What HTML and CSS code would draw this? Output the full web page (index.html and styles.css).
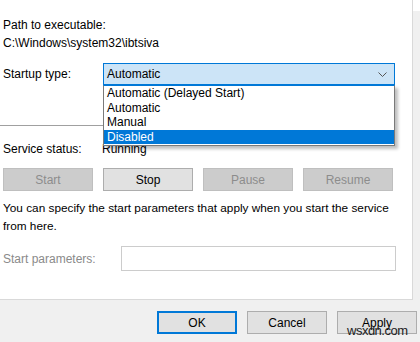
FILE: index.html
```html
<!DOCTYPE html>
<html lang="en">
<head>
    <meta charset="UTF-8">
    <title>Service Properties</title>
    <link rel="stylesheet" href="styles.css">
</head>
<body>
    <div class="dialog">
        <div class="page">
            <div class="field-text">Path to executable:</div>
            <div class="field-text">C:\Windows\system32\ibtsiva</div>

            <div class="row startup-row">
                <span class="label">Startup type:</span>
                <div class="combo">
                    <span>Automatic</span>
                    <svg class="chevron" width="9" height="5" viewBox="0 0 9 5">
                        <path d="M0.5 0.5 L4.5 4.5 L8.5 0.5" fill="none" stroke="#555" stroke-width="1"/>
                    </svg>
                    <ul class="combo-list">
                        <li>Automatic (Delayed Start)</li>
                        <li>Automatic</li>
                        <li>Manual</li>
                        <li class="selected">Disabled</li>
                    </ul>
                </div>
            </div>

            <div class="separator"></div>

            <div class="row status-row">
                <span class="label">Service status:</span>
                <span class="status">Running</span>
            </div>

            <div class="service-buttons">
                <button class="btn" disabled>Start</button>
                <button class="btn">Stop</button>
                <button class="btn" disabled>Pause</button>
                <button class="btn" disabled>Resume</button>
            </div>

            <p class="hint">You can specify the start parameters that apply when you start the service from here.</p>

            <div class="row params-row">
                <span class="label disabled-label">Start parameters:</span>
                <input class="params-input" type="text" disabled>
            </div>
        </div>
        <div class="gutter"></div>
        <div class="footer">
            <button class="btn footer-btn default-btn">OK</button>
            <button class="btn footer-btn">Cancel</button>
            <button class="btn footer-btn">Apply</button>
        </div>
    </div>
    <div class="watermark">wsxdn.com</div>
</body>
</html>
```

FILE: styles.css
```css
body {
    margin: 0;
    width: 420px;
    height: 342px;
    overflow: hidden;
    background-color: #ffffff;
    font-family: 'Liberation Sans', Arial, sans-serif;
    font-size: 12px;
    color: #000;
    position: relative;
}

.dialog {
    display: grid;
    grid-template-columns: 413px 7px;
    grid-template-rows: 300px 42px;
}

.page {
    background-color: #ffffff;
    border-right: 1px solid #d9d9d9;
    border-bottom: 1px solid #d9d9d9;
    box-sizing: border-box;
    padding: 16px 0 0 3px;
}

.gutter {
    background-color: #f0f0f0;
    margin-top: 11px;
}

.field-text {
    line-height: 18px;
}

.row {
    display: flex;
    align-items: center;
}

.label {
    width: 100px;
    flex-shrink: 0;
}

.startup-row {
    margin-top: 11px;
    height: 22px;
}

/* Раскрытый выпадающий список */
.combo {
    position: relative;
    width: 292px;
    height: 22px;
    box-sizing: border-box;
    border: 1px solid #0078d7;
    background-color: #cce4f7;
    display: flex;
    align-items: center;
    justify-content: space-between;
    padding: 0 7px 0 3px;
}

.chevron {
    display: block;
}

.combo-list {
    position: absolute;
    top: 21px;
    left: -1px;
    width: 292px;
    margin: 0;
    padding: 0 0 1px 0;
    list-style: none;
    background-color: #fff;
    border: 1px solid #7a7a7a;
    border-top: 1px solid #0078d7;
    box-sizing: border-box;
    box-shadow: 3px 3px 3px rgba(0, 0, 0, 0.25);
    z-index: 2;
}

.combo-list li {
    height: 14.5px;
    line-height: 14px;
    padding-left: 3px;
}

.combo-list li.selected {
    background-color: #0078d7;
    color: #fff;
}

.separator {
    margin-top: 40px;
    margin-left: -3px;
    width: 395px;
    height: 1px;
    background-color: #a0a0a0;
}

.status-row {
    margin-top: 14px;
    height: 18px;
}

.status {
    margin-left: -1px;
}

.service-buttons {
    display: flex;
    gap: 10px;
    margin-top: 10px;
}

.btn {
    font-family: 'Liberation Sans', Arial, sans-serif;
    font-size: 12px;
    color: #000;
    background-color: #e1e1e1;
    border: 1px solid #adadad;
    height: 23px;
    padding: 0;
    margin: 0;
    box-sizing: border-box;
}

.service-buttons .btn {
    width: 90px;
}

.btn:disabled {
    background-color: #cccccc;
    border-color: #bfbfbf;
    color: #8c8c8c;
}

.hint {
    margin: 8px 0 0 0;
    font-size: 11.8px;
    line-height: 18px;
    width: 400px;
}

.params-row {
    margin-top: 11px;
}

.disabled-label {
    width: 118px;
    color: #8a8a8a;
}

.params-input {
    width: 275px;
    height: 25px;
    box-sizing: border-box;
    border: 1px solid #cccccc;
    background-color: #fff;
    margin: 0;
}

.footer {
    grid-column: 1 / 3;
    background-color: #f0f0f0;
    display: flex;
    justify-content: flex-end;
    gap: 10px;
    padding: 11px 3px 0 0;
}

.footer-btn {
    width: 80px;
    height: 23px;
}

.default-btn {
    border: 1px solid #0078d7;
    box-shadow: inset 0 0 0 1px #0078d7;
}

.watermark {
    position: absolute;
    left: 347px;
    top: 323px;
    font-family: 'Liberation Sans', Arial, sans-serif;
    font-size: 13px;
    color: #222;
    letter-spacing: -0.5px;
}
```
